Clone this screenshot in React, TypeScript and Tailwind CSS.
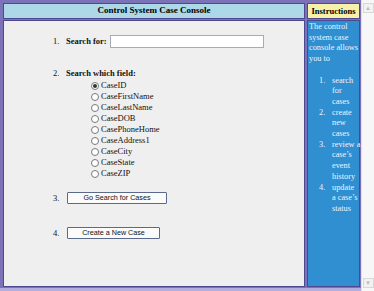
import React from 'react';

const fields = [
    'CaseID',
    'CaseFirstName',
    'CaseLastName',
    'CaseDOB',
    'CasePhoneHome',
    'CaseAddress1',
    'CaseCity',
    'CaseState',
    'CaseZIP',
];

const intro = ['The control', 'system case', 'console allows', 'you to'];

const steps = [
    ['search', 'for', 'cases'],
    ['create', 'new', 'cases'],
    ['review a', 'case\u2019s', 'event', 'history'],
    ['update', 'a case\u2019s', 'status'],
];

const Radio: React.FC<{ checked?: boolean }> = ({ checked }) => (
    <span className="w-[8px] h-[8px] rounded-full border border-[#7a7a7a] bg-white flex items-center justify-center shrink-0">
        {checked && <span className="w-[4px] h-[4px] rounded-full bg-[#333]"></span>}
    </span>
);

const Button: React.FC<{ label: string; width: string }> = ({ label, width }) => (
    <button
        className={`${width} h-[12px] border border-[#5a6a8a] bg-[#fbfbfb] rounded-[1px] text-[7.2px] leading-none text-[#111] flex items-center justify-center`}
        style={{ fontFamily: '"Liberation Sans", Arial, sans-serif' }}
    >
        {label}
    </button>
);

export default function App() {
    return (
        <div
            className="w-[374px] h-[291px] flex bg-[#f3f3f3] overflow-hidden"
            style={{ fontFamily: '"Liberation Serif", "Times New Roman", serif' }}
        >
            <div className="w-[361px] h-full bg-[#b4aede] flex flex-col">
                <div className="flex-1 flex bg-[#7b72b8] pt-[3px] pl-[3px] pr-[1px] pb-[1px] gap-[2px]">
                    {/* Main console */}
                    <div className="w-[302px] flex flex-col gap-[1px]">
                        <div className="h-[16px] bg-[#acd8e7] border border-[#4d4890] flex items-center justify-center text-[9px] font-bold text-black">
                            Control System Case Console
                        </div>
                        <div className="flex-1 bg-[#efefef] border border-[#4d4890] text-[8.5px] text-[#111] pl-[49px] pt-[13px]">
                            <div className="flex items-center h-[14px]">
                                <span className="w-[13px]">1.</span>
                                <span className="font-bold">Search for:</span>
                                <span className="ml-[3px] w-[154px] h-[13px] bg-white border border-[#a5acb5]"></span>
                            </div>

                            <div className="flex items-center h-[11px] mt-[20px]">
                                <span className="w-[13px]">2.</span>
                                <span className="font-bold">Search which field:</span>
                            </div>
                            <div className="pl-[38px] pt-[1px] flex flex-col">
                                {fields.map((field, idx) => (
                                    <label key={field} className="flex items-center gap-[2px] h-[11px]">
                                        <Radio checked={idx === 0} />
                                        <span>{field}</span>
                                    </label>
                                ))}
                            </div>

                            <div className="flex items-center h-[12px] mt-[13px]">
                                <span className="w-[14px]">3.</span>
                                <Button label="Go Search for Cases" width="w-[100px]" />
                            </div>
                            <div className="flex items-center h-[12px] mt-[23px]">
                                <span className="w-[14px]">4.</span>
                                <Button label="Create a New Case" width="w-[93px]" />
                            </div>
                        </div>
                    </div>

                    {/* Instructions */}
                    <div className="w-[53px] flex flex-col gap-[1px]">
                        <div className="h-[16px] bg-[#f6f0a9] border border-[#4d4890] flex items-center justify-center text-[8.5px] font-bold text-black">
                            Instructions
                        </div>
                        <div className="flex-1 bg-[#2f8fd0] border border-[#4d4890] text-[8.3px] leading-[10.7px] text-[#eef4ff] pl-[1px] pt-[1px]">
                            <p className="flex flex-col">
                                {intro.map((line) => (
                                    <span key={line} className="whitespace-nowrap">{line}</span>
                                ))}
                            </p>
                            <ol className="mt-[10.7px]">
                                {steps.map((lines, idx) => (
                                    <li key={idx} className="flex">
                                        <span className="w-[23px] pl-[10px] shrink-0">{idx + 1}.</span>
                                        <span className="flex flex-col">
                                            {lines.map((line) => (
                                                <span key={line} className="whitespace-nowrap">{line}</span>
                                            ))}
                                        </span>
                                    </li>
                                ))}
                            </ol>
                        </div>
                    </div>
                </div>
                <div className="h-[3px] bg-[#b4aede]"></div>
            </div>

            {/* Scrollbar */}
            <div className="flex-1 flex flex-col justify-between items-center bg-[#f7f7f7] border-l border-[#e0e0e0] py-[3px]">
                <div className="w-[11px] h-[10px] border border-[#d8d8d8] bg-[#f2f2f2] flex items-center justify-center text-[6px] text-[#bbb]">▲</div>
                <div className="w-[11px] h-[10px] border border-[#d8d8d8] bg-[#f2f2f2] flex items-center justify-center text-[6px] text-[#bbb]">▼</div>
            </div>
        </div>
    );
}
